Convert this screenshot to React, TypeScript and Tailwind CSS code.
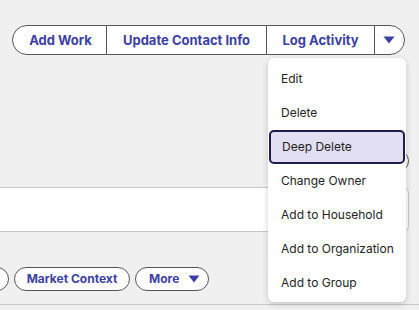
import React from "react";

const menuItems = [
  "Edit",
  "Delete",
  "Deep Delete",
  "Change Owner",
  "Add to Household",
  "Add to Organization",
  "Add to Group",
];

function Caret({ className = "" }: { className?: string }) {
  return (
    <svg width="12" height="8" viewBox="0 0 12 8" className={className}>
      <path d="M0.5 0.5 L11.5 0.5 L6 7.5 Z" fill="#3c3fa3" />
    </svg>
  );
}

export default function App() {
  const active = "Deep Delete";

  return (
    <div
      className="w-[419px] h-[310px] overflow-hidden bg-[#f0f0f0] relative"
      style={{ fontFamily: "Inter, 'Noto Sans', sans-serif" }}
    >
      {/* header actions */}
      <div className="flex justify-end pt-[25px] pr-[14px]">
        <div className="relative">
          <div className="flex h-[30px] items-stretch rounded-full border border-[#555] bg-white text-[13px] font-bold text-[#3c3fa3]">
            <button className="w-[93px] pl-[2px] pt-[1px] flex items-center justify-center">Add Work</button>
            <button className="w-[160px] pt-[1px] flex items-center justify-center border-l border-[#555]">
              Update Contact Info
            </button>
            <button className="w-[108px] pt-[1px] flex items-center justify-center border-l border-[#555]">
              Log Activity
            </button>
            <button className="w-[30px] pr-[2px] flex items-center justify-center border-l border-[#555]">
              <Caret />
            </button>
          </div>

          {/* dropdown menu */}
          <div className="absolute right-[-1px] top-[33px] w-[138px] rounded-[6px] bg-white pt-[4px] pb-[2px] shadow-[0_2px_6px_rgba(0,0,0,0.18)] z-10">
            {menuItems.map((item) => (
              <div
                key={item}
                className={
                  item === active
                    ? "mx-[1px] h-[34px] flex items-center pl-[11px] rounded-[5px] border-2 border-[#1f1d4a] bg-[#e2dff2] text-[12px] text-[#222]"
                    : "h-[34px] flex items-center pl-[13px] text-[12px] text-[#222]"
                }
              >
                {item}
              </div>
            ))}
          </div>
        </div>
      </div>

      {/* partially hidden button */}
      <div className="flex justify-end pr-[10px] mt-[95px]">
        <div className="w-[60px] h-[22px] rounded-full border border-[#555] bg-white" />
      </div>

      {/* white panel */}
      <div className="mt-[15px] ml-[-10px] mr-[10px] h-[45px] rounded-r-[6px] border border-[#c8c8c8] bg-white" />

      {/* pill row */}
      <div className="mt-[35px] flex items-center gap-[5px] ml-[-40px] text-[12px] font-bold text-[#3c3fa3]">
        <div className="w-[49px] h-[24px] rounded-full border border-[#555] bg-white" />
        <button className="h-[24px] w-[116px] rounded-full border border-[#555] bg-white">
          Market Context
        </button>
        <button className="h-[24px] w-[74px] pl-[13px] rounded-full border border-[#555] bg-white flex items-center gap-[9px]">
          More
          <Caret />
        </button>
      </div>

      <div className="mt-[13px] border-t border-[#c8c8c8]" />
    </div>
  );
}
